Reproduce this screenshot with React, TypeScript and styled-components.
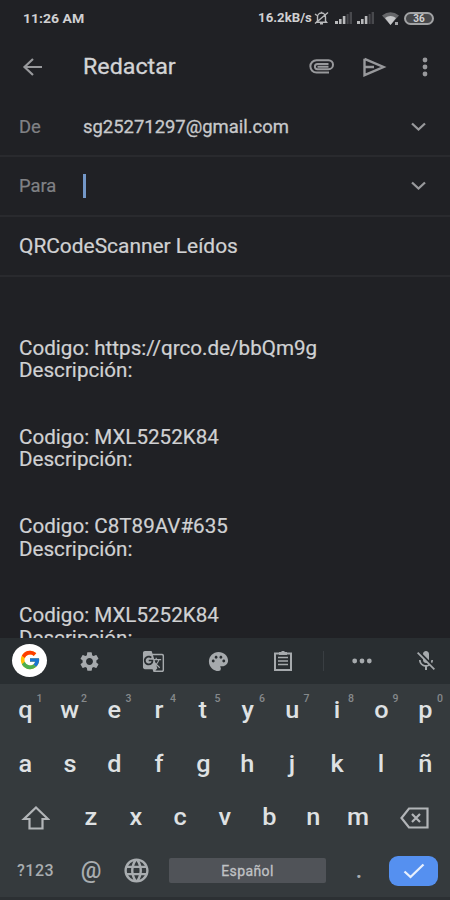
import React from 'react';
import styled, { createGlobalStyle } from 'styled-components';
import { FcGoogle } from 'react-icons/fc';
import {
  MdSettings,
  MdGTranslate,
  MdPalette,
  MdMicOff,
  MdLanguage,
} from 'react-icons/md';

const Global = createGlobalStyle`
  * { box-sizing: border-box; }
  html, body { margin: 0; background: #202125; }
  body { font-family: Roboto, "Liberation Sans", sans-serif; overflow: hidden; }
  svg { display: block; flex: none; }
`;

const Screen = styled.div`
  width: 450px;
  height: 900px;
  display: flex;
  flex-direction: column;
  overflow: hidden;
  background: #202125;
  color: #d0d1d3;
`;

const StatusBar = styled.div`
  height: 36px;
  padding: 1px 16px 0 23px;
  display: flex;
  align-items: center;
  color: #d0d0d2;
  font-weight: 700;
`;

const Clock = styled.span`
  flex: 1;
  font-size: 12.5px;
  transform: scaleX(1.12);
  transform-origin: left;
`;

const Speed = styled.span`
  font-size: 12px;
  margin-right: 2px;
  transform: scaleX(1.1);
  transform-origin: right;
`;

const Battery = styled.span`
  width: 30px;
  height: 13px;
  margin-left: 4px;
  border: 2px solid #a2a3a5;
  border-radius: 7px;
  display: flex;
  align-items: center;
  justify-content: center;
  font-size: 10px;
  line-height: 9px;
  background: #46474a;
`;

const Header = styled.header`
  height: 62px;
  padding: 0 21px 0 22px;
  display: flex;
  align-items: center;
  color: #98999c;
`;

const Title = styled.h1`
  flex: 1;
  margin: 0 0 0 39px;
  font-size: 22px;
  font-weight: 400;
  color: #d3d4d6;
  -webkit-text-stroke: 0.3px #d3d4d6;
  transform: scaleX(1.057);
  transform-origin: left;
`;

const Actions = styled.div`
  display: flex;
  align-items: center;
`;

const Field = styled.div<{ $h: number }>`
  height: ${(p) => p.$h}px;
  padding: 1px 24px 0 19px;
  display: flex;
  align-items: center;
  border-bottom: 2px solid #292a2e;
  font-size: 18px;
`;

const Label = styled.span`
  width: 64px;
  color: #808185;
  font-size: 17.5px;
  transform: scaleX(1.05);
  transform-origin: left;
  -webkit-text-stroke: 0.2px #808185;
`;

const Value = styled.span`
  flex: 1;
  font-size: 17.5px;
  transform: scaleX(1.053);
  transform-origin: left;
  -webkit-text-stroke: 0.3px #c8c9cb;
  color: #c8c9cb;
`;

const Caret = styled.span`
  width: 3px;
  height: 24px;
  margin-bottom: 1px;
  background: #7397c8;
`;

const Fill = styled.span`
  flex: 1;
`;

const Subject = styled.span`
  font-size: 19.5px;
  transform: scaleX(1.072);
  transform-origin: left;
  -webkit-text-stroke: 0.2px #d0d1d3;
`;

const Body = styled.main`
  height: 362px;
  padding: 61px 19px 0;
  overflow: hidden;
  font-size: 19.5px;
  line-height: 22.4px;
`;

const Entry = styled.div`
  height: 89.3px;
  transform: scaleX(1.057);
  transform-origin: left;
  -webkit-text-stroke: 0.2px #d0d1d3;
`;

const Toolbar = styled.div`
  height: 46px;
  display: grid;
  grid-template-columns: 57px 64px 65px 65px 64px 16px 62px 57px;
  align-items: center;
  justify-items: center;
  background: #292e31;
  color: #a6aaad;
`;

const GoogleBadge = styled.span`
  width: 35px;
  height: 33px;
  margin: 0 0 2px 2px;
  border-radius: 50%;
  background: #fff;
  display: flex;
  align-items: center;
  justify-content: center;
`;

const Mic = styled(MdMicOff)`
  margin-left: 9px;
`;

const Divider = styled.span`
  width: 1px;
  height: 20px;
  background: #393e42;
`;

const Keyboard = styled.div`
  flex: 1;
  background: #353a3d;
  color: #dfe1e3;
  display: grid;
  grid-template-rows: 53px 54px 53px 53px;
  border-bottom: 3px solid #2c3033;
`;

const LetterRow = styled.div`
  display: grid;
  grid-template-columns: repeat(10, 44.5px);
  padding-left: 3px;
`;

const ShiftRow = styled.div`
  display: grid;
  grid-template-columns: 69px repeat(7, 44.5px) 69px;
`;

const BottomRow = styled.div`
  display: grid;
  grid-template-columns: 69px 44px 46px 176px 48px 60px;
  align-items: center;
  color: #a9adb0;
`;

const Key = styled.span`
  position: relative;
  display: flex;
  align-items: center;
  justify-content: center;
  font-size: 23px;
  font-weight: 500;
`;

const Letter = styled.span`
  transform: scaleX(1.1);
`;

const Hint = styled.sup`
  position: absolute;
  top: 10px;
  right: 5px;
  font-size: 10.5px;
  line-height: 10px;
  color: #85898c;
`;

const Symbols = styled.span`
  padding-left: 17px;
  font-size: 16px;
  font-weight: 500;
  letter-spacing: 0.5px;
`;

const Space = styled.span`
  width: 157px;
  height: 25px;
  margin-left: 10px;
  border-radius: 2px;
  background: #505358;
  display: flex;
  align-items: center;
  justify-content: center;
  font-size: 14px;
  letter-spacing: 0.4px;
  color: #c0c2c5;
  -webkit-text-stroke: 0.3px #c0c2c5;
`;

const Enter = styled.span`
  width: 49px;
  height: 30px;
  margin-left: 6px;
  border-radius: 9px;
  background: #5590f0;
  display: flex;
  align-items: center;
  justify-content: center;
`;

const Chevron = () => (
  <svg width="15" height="10" viewBox="0 0 15 10" fill="none" stroke="#98999c" strokeWidth="2.3">
    <path d="M1 1.5 7.5 7.5 14 1.5" />
  </svg>
);

const Signal = () => (
  <svg width="18" height="12" viewBox="0 0 18 12">
    <path d="M0 9h3v3H0zM4 7h2.600v5H4zM7.800 4h2.600v8H7.800z" fill="#b9babc" />
    <path d="M11.600 2h2v10h-2zM14.600 0H17v12h-2.400z" fill="#48494d" />
  </svg>
);

const SignalGroup = styled.span`
  display: flex;
  gap: 4px;
  margin: 0 7px 0 6px;
`;

const row1 = 'qwertyuiop'.split('');
const row2 = 'asdfghjklñ'.split('');
const row3 = 'zxcvbnm'.split('');
const codes = ['https://qrco.de/bbQm9g', 'MXL5252K84', 'C8T89AV#635', 'MXL5252K84'];

export default function App() {
  return (
    <Screen>
      <Global />
      <StatusBar>
        <Clock>11:26 AM</Clock>
        <Speed>16.2kB/s</Speed>
        <svg width="15" height="14" viewBox="0 0 15 14" fill="none" stroke="#b9babc" strokeWidth="1.4">
          <path d="M3.5 10V6a4 4 0 0 1 8 0v4l1 1.2h-10zM6 12.7h3M7.5 2V.8M1 12.5 14 1.5M1 3l2 1.5" />
        </svg>
        <SignalGroup>
          <Signal />
          <Signal />
        </SignalGroup>
        <svg width="18" height="13" viewBox="0 0 18 13">
          <path d="M0 3.5Q8.5-3 17 3.5L8.5 13z" fill="#66676a" />
          <path d="M3 6Q8.5 2 14 6L8.5 13z" fill="#c5c6c8" />
          <path d="M13 10h3v3h-3z" fill="#a3a4a7" />
        </svg>
        <Battery>36</Battery>
      </StatusBar>
      <Header>
        <svg width="22" height="20" viewBox="0 0 22 20" fill="none" stroke="currentColor" strokeWidth="2.2">
          <path d="M20 10H3M11 2 2.5 10 11 18" />
        </svg>
        <Title>Redactar</Title>
        <Actions>
          <svg width="26" height="15" viewBox="0 0 26 15" fill="none" stroke="currentColor" strokeWidth="2">
            <path d="M20 13.500H7.500a6 6 0 0 1 0-12.300H19.500a4.500 4.500 0 0 1 0 9H8.500a2.600 2.600 0 0 1 0-5.200H19.500M8.500 7.700H19.500" />
          </svg>
          <svg width="86" height="20" viewBox="-28 0 86 20" fill="none" stroke="currentColor" strokeWidth="2.4">
            <path d="M1.500 1.800 20.500 10 1.500 18.200V1.800M2 10H11" />
          </svg>
          <svg width="8" height="20" viewBox="0 0 8 20" fill="currentColor">
            <circle cx="4" cy="3" r="2.4" />
            <circle cx="4" cy="10" r="2.4" />
            <circle cx="4" cy="17" r="2.4" />
          </svg>
        </Actions>
      </Header>
      <Field $h={59}>
        <Label>De</Label>
        <Value>sg25271297@gmail.com</Value>
        <Chevron />
      </Field>
      <Field $h={60}>
        <Label>Para</Label>
        <Caret />
        <Fill />
        <Chevron />
      </Field>
      <Field $h={60}>
        <Subject>QRCodeScanner Leídos</Subject>
      </Field>
      <Body>
        {codes.map((c, i) => (
          <Entry key={i}>
            <div>Codigo: {c}</div>
            <div>Descripción:</div>
          </Entry>
        ))}
      </Body>
      <Toolbar>
        <GoogleBadge><FcGoogle size={22} /></GoogleBadge>
        <MdSettings size={23} />
        <MdGTranslate size={23} />
        <MdPalette size={23} />
        <svg width="20" height="22" viewBox="0 0 20 22" fill="none" stroke="currentColor">
          <path d="M2 3.5h16v16.500H2z" strokeWidth="2" />
          <path d="M5 7.5h10M5 11h10M5 14.5h10" strokeWidth="1.6" />
          <path d="M6 3.5h8M10 1v3" strokeWidth="3" />
        </svg>
        <Divider />
        <svg width="20" height="6" viewBox="0 0 20 6" fill="currentColor">
          <circle cx="2.7" cy="3" r="2.4" />
          <circle cx="10" cy="3" r="2.4" />
          <circle cx="17.3" cy="3" r="2.4" />
        </svg>
        <Mic size={24} />
      </Toolbar>
      <Keyboard>
        <LetterRow>
          {row1.map((k, i) => (
            <Key key={k}><Letter>{k}</Letter><Hint>{(i + 1) % 10}</Hint></Key>
          ))}
        </LetterRow>
        <LetterRow>
          {row2.map((k) => <Key key={k}><Letter>{k}</Letter></Key>)}
        </LetterRow>
        <ShiftRow>
          <Key>
            <svg width="30" height="24" viewBox="-2 0 30 24" fill="none" stroke="#b2b5b8" strokeWidth="2.2">
              <path d="M14 1.500 26 13H20.500V22.500H7.500V13H2z" />
            </svg>
          </Key>
          {row3.map((k) => <Key key={k}><Letter>{k}</Letter></Key>)}
          <Key>
            <svg width="30" height="22" viewBox="0 0 30 22" fill="none" stroke="#b2b5b8" strokeWidth="2.200">
              <path d="M9 1.500H27.500V20.500H9L1.500 11zM12 7l8 8M20 7l-8 8" />
            </svg>
          </Key>
        </ShiftRow>
        <BottomRow>
          <Symbols>?123</Symbols>
          <Key>@</Key>
          <Key><MdLanguage size={29} /></Key>
          <Space>Español</Space>
          <Key>.</Key>
          <Enter>
            <svg width="22" height="16" viewBox="0 0 22 16" fill="none" stroke="#e8f0fd" strokeWidth="2.300">
              <path d="M1.500 8.500 7.500 14 20.500 1.500" />
            </svg>
          </Enter>
        </BottomRow>
      </Keyboard>
    </Screen>
  );
}
